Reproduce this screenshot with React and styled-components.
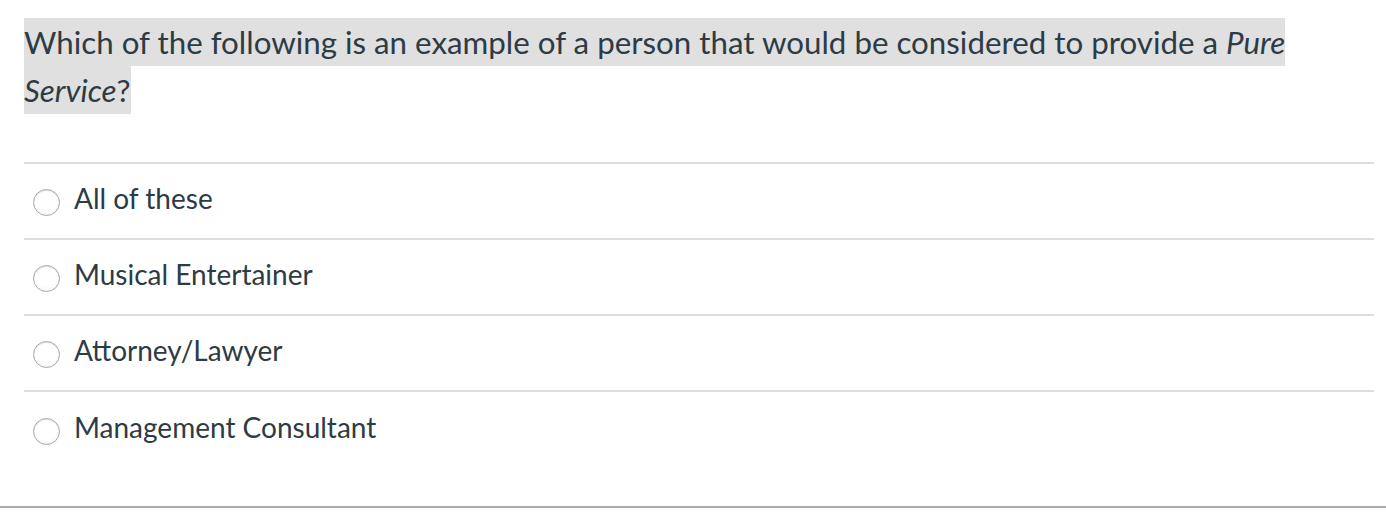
import React from "react";
import styled, { createGlobalStyle } from "styled-components";

const GlobalStyle = createGlobalStyle`
  html, body {
    margin: 0;
    padding: 0;
    background: #fff;
  }
  body {
    font-family: Lato, "Open Sans", "Liberation Sans", sans-serif;
    color: #2d3b45;
  }
`;

const Page = styled.div`
  width: 1386px;
  height: 518px;
  box-sizing: border-box;
  padding-top: 18px;
`;

const Question = styled.div`
  padding: 0 12px 0 24px;
  font-size: 31.3px;
  line-height: 48px;
  margin-bottom: 48px;
`;

const Highlight = styled.span`
  background: #e0e0e0;
  padding: 5px 0;
  box-decoration-break: clone;
  -webkit-box-decoration-break: clone;
`;

const Answers = styled.div`
  margin: 0 12px 0 24px;
  border-top: 2px solid #dedede;
`;

const Row = styled.label`
  display: flex;
  align-items: center;
  height: 76px;
  box-sizing: border-box;
  padding: 0 0 6px 9px;
  border-bottom: ${(p) => (p.$last ? "none" : "2px solid #dedede")};
  gap: 14px;
  font-size: 28px;
  cursor: pointer;
`;

const Radio = styled.span`
  width: 27px;
  height: 27px;
  border-radius: 50%;
  box-sizing: border-box;
  border: 1px solid #a8a8a8;
  background: radial-gradient(circle at 50% 35%, #ffffff 55%, #eeeeee 100%);
  box-shadow: inset 0 1px 1px rgba(0, 0, 0, 0.12);
  flex: none;
  margin-top: 8px;
`;

const Footer = styled.div`
  margin-top: 38px;
  border-bottom: 2px solid #aaaaaa;
`;

const answers = [
  "All of these",
  "Musical Entertainer",
  "Attorney/Lawyer",
  "Management Consultant",
];

const App = () => {
  return (
    <Page>
      <GlobalStyle />
      <Question>
        <Highlight>
          Which of the following is an example of a person that would be
          considered to provide a <em>Pure Service</em>?
        </Highlight>
      </Question>
      <Answers>
        {answers.map((a, i) => (
          <Row key={a} $last={i === answers.length - 1}>
            <Radio />
            {a}
          </Row>
        ))}
      </Answers>
      <Footer />
    </Page>
  );
};

export default App;
